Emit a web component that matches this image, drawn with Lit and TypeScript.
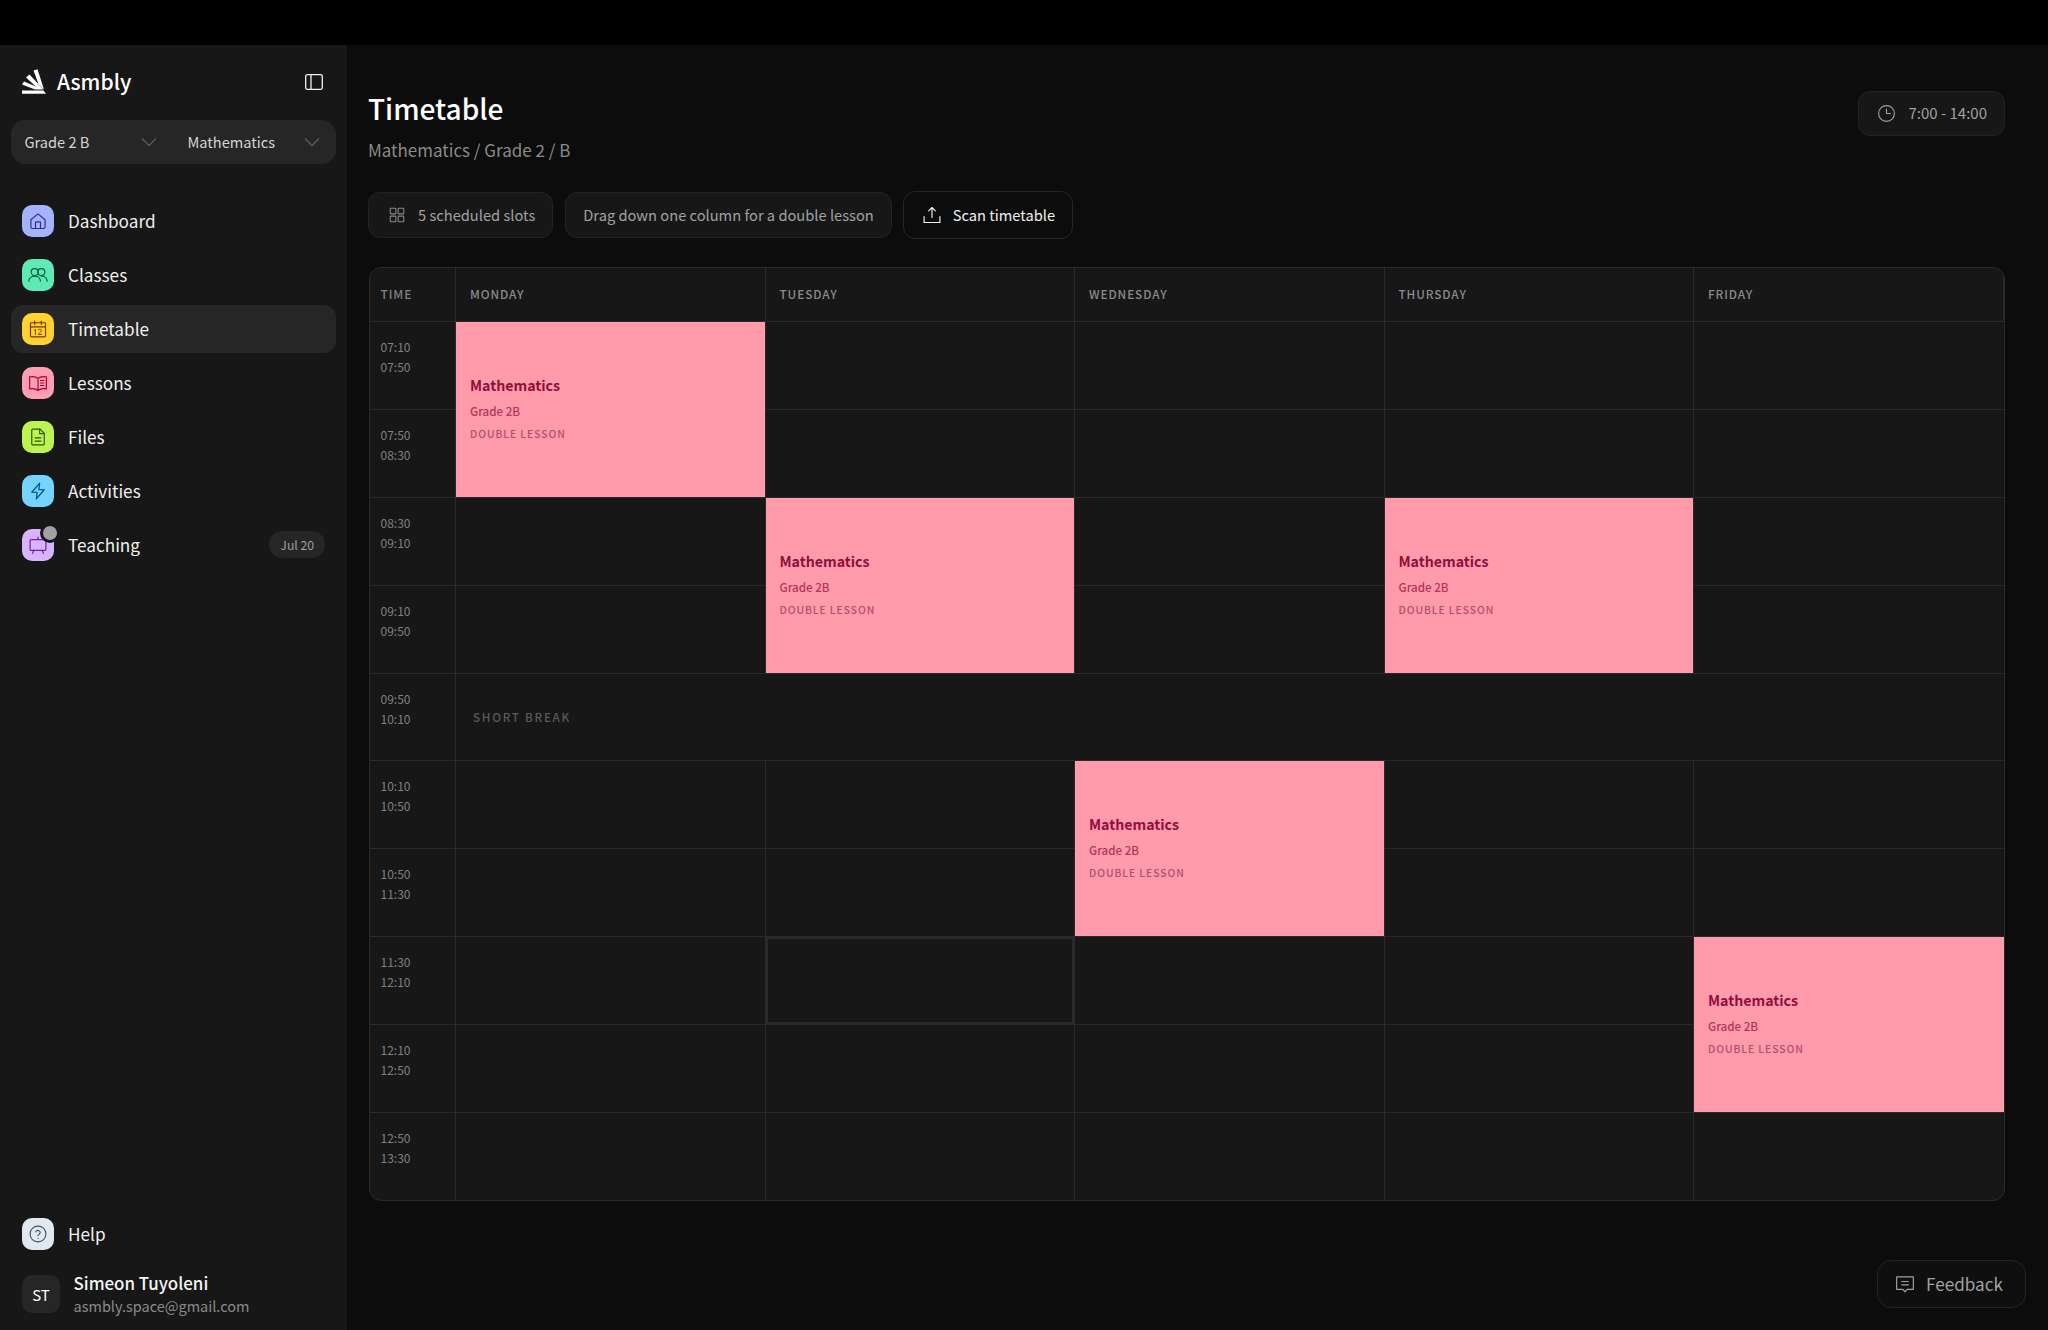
import { LitElement, html, css, svg } from "lit";
import { customElement } from "lit/decorators.js";

const ic = (color: string, body: unknown, size = 20) => html`<svg width=${size} height=${size} viewBox="0 0 24 24" fill="none" stroke=${color} stroke-width="1.4" stroke-linecap="round" stroke-linejoin="round">${body}</svg>`;

const NAV = [
  { label: "Dashboard", bg: "#a3b3ff", fg: "#312c85", icon: svg`<path d="M3.500 10.500 12 3.500l8.500 7v8.500a2 2 0 0 1-2 2H5.500a2 2 0 0 1-2-2z"/><path d="M9 21v-7a1 1 0 0 1 1-1h4a1 1 0 0 1 1 1v7"/>` },
  { label: "Classes", bg: "#5ee9b5", fg: "#006045", icon: svg`<circle cx="8" cy="8.500" r="4.200"/><circle cx="16" cy="8.500" r="4.200"/><path d="M1 19.500c.3-3.500 3.200-6 7-6s6.700 2.500 7 6"/><path d="M16.500 13.500c3.500 0 6.200 2.500 6.500 6"/>` },
  { label: "Timetable", bg: "#ffd230", fg: "#7b3306", icon: svg`<rect x="3" y="4.500" width="18" height="17" rx="1"/><path d="M3 9.500h18M8 2.500v4M16 2.500v4"/><path d="M7.500 13.500l1.500-1v6M12.500 13c2-1.500 4-.5 3.500 1.200-.3 1-3.500 3-3.500 4.300H16.500" stroke-width="1.100"/>` },
  { label: "Lessons", bg: "#ff9eb0", fg: "#a50036", icon: svg`<path d="M12 6.500C10 4.500 6 4 2 4.500v14.500c4-.5 8 0 10 2 2-2 6-2.500 10-2V4.500c-4-.5-8 0-10 2zM12 6.500V21"/><path d="M15 9h4M15 12h4M15 15h4"/>` },
  { label: "Files", bg: "#bbf451", fg: "#35530e", icon: svg`<path d="M14.500 2.500H6a1.500 1.500 0 0 0-1.500 1.500v16A1.500 1.500 0 0 0 6 21.500h12a1.500 1.500 0 0 0 1.500-1.500V7.500z"/><path d="M14 2.500v5.500h5.500M8.500 13h7M8.500 17h7"/>` },
  { label: "Activities", bg: "#74d4ff", fg: "#024a70", icon: svg`<path d="M14 2.500 4.500 13.500H11l-1 8 9.500-11H13z"/>` },
  { label: "Teaching", bg: "#d8b4fe", fg: "#6b21a8", dot: true, badge: "Jul 20", icon: svg`<rect x="2.500" y="5.500" width="19" height="13" rx="1.500"/><path d="M12 5.500V2.500M7 18.500l-1.500 3.500M17 18.500l1.500 3.500"/>` },
];

const ROW_TIMES = [
  ["07:10", "07:50"], ["07:50", "08:30"], ["08:30", "09:10"], ["09:10", "09:50"], ["09:50", "10:10"],
  ["10:10", "10:50"], ["10:50", "11:30"], ["11:30", "12:10"], ["12:10", "12:50"], ["12:50", "13:30"],
];
const DAYS = ["Monday", "Tuesday", "Wednesday", "Thursday", "Friday"];
const EVENTS: Record<string, boolean> = { "0:0": true, "2:1": true, "2:3": true, "5:2": true, "7:4": true };
const COVERED = new Set(["1:0", "3:1", "3:3", "6:2", "8:4"]);

@customElement("app-root")
export class AppRoot extends LitElement {
  static styles = css`
    :host { display: block; width: 2048px; height: 1330px; background: #0c0c0c; color: #fff; overflow: hidden; position: relative;
      font-family: "Noto Sans CJK SC", "Noto Sans", sans-serif; }
    * { box-sizing: border-box; }
    .top { height: 45px; background: #000; }
    .body { display: flex; height: 1285px; }
    .side { width: 347px; flex: none; background: #171717; display: flex; flex-direction: column; padding: 0 11px 0; }
    .brand { height: 75px; display: flex; align-items: center; padding: 0 13px 3px 11px; gap: 11px; }
    .brand .name { font-size: 21px; font-weight: 500; flex: 1; }
    .collapse { margin-top: 2px; }
    .selects { height: 44px; background: #262626; border-radius: 14px; display: flex; font-size: 14.600px; color: #d4d4d4; }
    .sel { flex: 1; display: flex; align-items: center; justify-content: space-between; padding: 0 16px 0 13.500px; }
    .sel:first-child { padding-right: 17px; }
    .sel span { padding-bottom: 2px; }
    .nav { display: flex; flex-direction: column; gap: 6px; margin-top: 32.500px; }
    .item { height: 48px; border-radius: 12px; display: flex; align-items: center; padding: 0 11px; gap: 14px; font-size: 17.200px; color: #f0f0f0; }
    .item.active { background: #262626; }
    .tile { width: 32px; height: 32px; border-radius: 10px; display: flex; align-items: center; justify-content: center; position: relative; flex: none; }
    .dot { position: absolute; top: -6px; right: -6px; width: 14px; height: 14px; border-radius: 50%; background: #a1a1a1; border: 3px solid #171717; box-sizing: content-box; }
    .label { flex: 1; padding-bottom: 1px; }
    .badge { height: 27px; padding: 0 11px; border-radius: 14px; background: #262626; color: #a1a1a1; font-size: 12.200px; display: flex; align-items: center; }
    .spacer { flex: 1; }
    .user { display: flex; align-items: center; gap: 13.500px; padding: 0 11px; margin-top: 13px; margin-bottom: 13px; }
    .avatar { width: 38px; height: 38px; border-radius: 10px; background: #262626; display: flex; align-items: center; justify-content: center; font-size: 15px; font-weight: 400; flex: none; }
    .uname { font-size: 16.900px; font-weight: 500; line-height: 24px; color: #f5f5f5; }
    .email { font-size: 14.500px; line-height: 22px; color: #8a8a8a; }
    .main { flex: 1; padding: 43px 43px 0 21px; min-width: 0; }
    .head { display: flex; justify-content: space-between; align-items: flex-start; }
    h1 { margin: 0; font-size: 28px; line-height: 40px; font-weight: 500; }
    .sub { font-size: 17px; line-height: 24px; color: #8a8a8a; margin-top: 10px; }
    .pill { display: flex; align-items: center; background: #171717; border: 1px solid #232323; border-radius: 12px; color: #a1a1a1; font-size: 14.670px; height: 46px; gap: 12px; padding: 0 17px 0 19px; }
    .pill span, .pill.plain { padding-bottom: 2px; }
    .pill.plain { padding-left: 17px; padding-right: 17px; }
    .toolbar { display: flex; align-items: center; gap: 12px; margin-top: 29px; }
    .time { height: 45px; margin-top: 3px; font-size: 15px; padding-left: 18px; }
    .scan { background: #0c0c0c; border: 1.500px solid #262626; height: 48px; color: #f0f0f0; font-weight: 400; padding: 0 17px 0 18px; gap: 11px; margin-left: -1px; }
    .grid { margin: 28px 0 0 1px; display: grid; grid-template-columns: 86px repeat(5, 1fr); grid-template-rows: 54px repeat(4, 88px) 87px repeat(4, 88px) 87px; border: 1.500px solid #2a2a2a; border-radius: 12px; background: #171717; overflow: hidden; width: 1635.500px; }
    .cell { border-right: 1px solid #2a2a2a; border-bottom: 1px solid #2a2a2a; min-width: 0; }
    .cell.last { border-right: 0; }
    .cell.end { border-bottom: 0; }
    .th { display: flex; align-items: center; padding: 0 14px 2px; font-size: 11.800px; font-weight: 500; letter-spacing: 0.9px; color: #8a8a8a; text-transform: uppercase; }
    .th.t { padding: 0 10.500px 2px; }
    .t { font-size: 12px; line-height: 20px; color: #808080; padding: 15px 10.500px 0; }
    .t div { display: block; }
    .brk { grid-column: span 5; display: flex; align-items: center; padding: 0 0 2px 17px; font-size: 11.700px; font-weight: 500; letter-spacing: 1.700px; color: #5a5a5a; text-transform: uppercase; border-right: 0; }
    .ev { grid-row: span 2; background: #ff9baa; display: flex; flex-direction: column; justify-content: center; padding: 0 14px 3px 14px; color: #8f0f40; border-right: 1px solid #2a2a2a; border-bottom: 1px solid #2a2a2a; }
    .ev.last { border-right: 0; }
    .ev b { font-size: 14.200px; font-weight: 700; line-height: 20px; }
    .ev span { font-size: 11.600px; line-height: 18px; margin-top: 7px; color: #b2355f; font-weight: 500; }
    .ev i { font-style: normal; font-size: 10.400px; line-height: 16px; letter-spacing: 0.9px; margin-top: 6px; color: #b94a72; font-weight: 500; }
    .sel-cell { box-shadow: inset 0 0 0 2px #2a2a2a; }
    .feedback { position: absolute; left: 1877px; top: 1260px; width: 149px; height: 48px; border: 1.500px solid #232323; border-radius: 14px; background: #0f0f0f; color: #a1a1a1; font-size: 17.100px; display: flex; align-items: center; justify-content: center; gap: 11px; padding-right: 5px; }
    .feedback span { padding-bottom: 2px; }
  `;

  render() {
    const chev = html`<svg width="16" height="10" viewBox="0 0 16 10" fill="none" stroke="#5c5c5c" stroke-width="1.300"><path d="M1 1.500l7 7 7-7"/></svg>`;
    return html`
      <div class="top"></div>
      <div class="body">
        <aside class="side">
          <div class="brand">
            <svg width="24" height="25" viewBox="0 0 24 25" fill="#fff"><path d="M0 21.500H21.500L24 24.800H0Z"/><path d="M2 12.500 0 15.500l13 5h8z"/><path d="M7.500 5.500 4 8.500l11.500 10.500 6 1.500z"/><path d="M15.500 .3 11.500 1.500l5 13.500 5.500 5.500z"/></svg>
            <span class="name">Asmbly</span>
            <svg class="collapse" width="18" height="16" viewBox="0 0 18 16" fill="none" stroke="#f0f0f0" stroke-width="1.300"><rect x=".7" y=".7" width="16.600" height="14.600" rx="1.500"/><path d="M6 .7v14.600"/></svg>
          </div>
          <div class="selects">
            <div class="sel"><span>Grade 2 B</span>${chev}</div>
            <div class="sel"><span>Mathematics</span>${chev}</div>
          </div>
          <nav class="nav">
            ${NAV.map((n) => html`
              <div class="item ${n.label === "Timetable" ? "active" : ""}">
                <div class="tile" style="background:${n.bg}">${ic(n.fg, n.icon)}${n.dot ? html`<div class="dot"></div>` : ""}</div>
                <span class="label">${n.label}</span>
                ${n.badge ? html`<span class="badge">${n.badge}</span>` : ""}
              </div>`)}
          </nav>
          <div class="spacer"></div>
          <div class="item">
            <div class="tile" style="background:#e2e8f0">${ic("#45556c", svg`<circle cx="12" cy="12" r="9.500"/><path d="M9.300 9.500a2.800 2.800 0 0 1 5.400.8c0 1.800-2.700 2.400-2.700 3.700M12 17.300v.1"/>`)}</div>
            <span class="label">Help</span>
          </div>
          <div class="user">
            <div class="avatar">ST</div>
            <div>
              <div class="uname">Simeon Tuyoleni</div>
              <div class="email">asmbly.space@gmail.com</div>
            </div>
          </div>
        </aside>
        <main class="main">
          <div class="head">
            <div>
              <h1>Timetable</h1>
              <div class="sub">Mathematics / Grade 2 / B</div>
            </div>
            <div class="pill time">
              ${ic("#a1a1a1", svg`<circle cx="12" cy="12" r="10"/><path d="M12 6.500V12h5"/>`, 19)}
              <span>7:00 - 14:00</span>
            </div>
          </div>
          <div class="toolbar">
            <div class="pill">
              ${ic("#8a8a8a", svg`<rect x="3" y="3" width="7.500" height="7.500" rx="1"/><rect x="13.500" y="3" width="7.500" height="7.500" rx="1"/><rect x="3" y="13.500" width="7.500" height="7.500" rx="1"/><rect x="13.500" y="13.500" width="7.500" height="7.500" rx="1"/>`, 18)}
              <span>5 scheduled slots</span>
            </div>
            <div class="pill plain">Drag down one column for a double lesson</div>
            <div class="pill scan">
              ${ic("#f0f0f0", svg`<path d="M12 15V3M8 7l4-4 4 4M2.500 14v7h19v-7"/>`, 20)}
              <span>Scan timetable</span>
            </div>
          </div>
          <div class="grid">
            <div class="cell th t">Time</div>
            ${DAYS.map((d) => html`<div class="cell th">${d}</div>`)}
            ${ROW_TIMES.map((t, r) => html`
              <div class="cell t ${r === 9 ? "end" : ""}"><div>${t[0]}</div><div>${t[1]}</div></div>
              ${r === 4
                ? html`<div class="cell brk">Short break</div>`
                : DAYS.map((_, c) => {
                    const key = `${r}:${c}`;
                    if (COVERED.has(key)) return "";
                    if (EVENTS[key]) return html`<div class="ev ${c === 4 ? "last" : ""}"><b>Mathematics</b><span>Grade 2B</span><i>DOUBLE LESSON</i></div>`;
                    return html`<div class="cell ${c === 4 ? "last" : ""} ${r === 9 ? "end" : ""} ${r === 7 && c === 1 ? "sel-cell" : ""}"></div>`;
                  })}
            `)}
          </div>
        </main>
      </div>
      <div class="feedback">
        ${ic("#a1a1a1", svg`<path d="M2 3.500h20v15h-7.500L12 21.500 9.500 18.500H2z"/><path d="M8 9h8M8 13h8"/>`, 20)}
        <span>Feedback</span>
      </div>
    `;
  }
}
